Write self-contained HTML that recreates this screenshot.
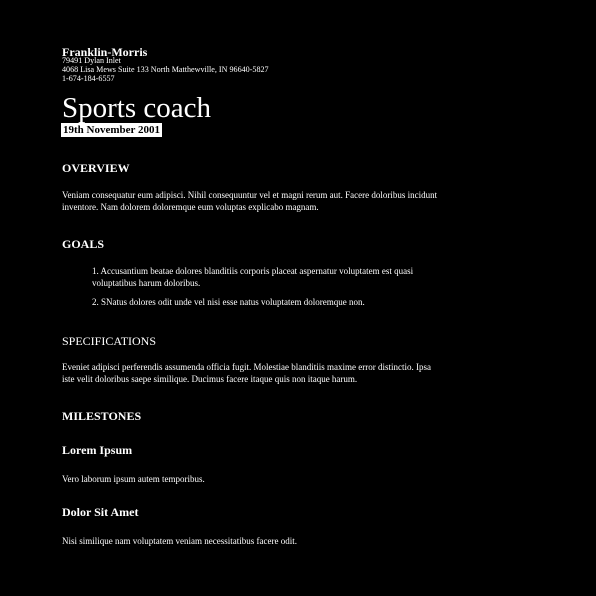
<!DOCTYPE html>
<html><head><style>
body{margin:0;background:#000;width:596px;height:596px;position:relative;overflow:hidden;color:#fff;font-family:"Liberation Serif",serif;}
div{position:absolute;left:62px;white-space:nowrap;}
.s{font-size:9px;line-height:12px;}
.h{font-size:12px;font-weight:bold;line-height:14px;}
.p{white-space:normal;width:380px;}
</style></head><body>
<div class="h" style="top:45px">Franklin-Morris</div>
<div style="top:56px;font-size:8.1px;line-height:9px">79491 Dylan Inlet<br>4068 Lisa Mews Suite 133 North Matthewville, IN 96640-5827<br>1-674-184-6557</div>
<div style="top:90px;font-size:29px;line-height:36px">Sports coach</div>
<div style="top:124px;font-size:11px;line-height:12px;font-weight:bold;background:#fff;color:#000;padding:0 1px;outline:1px solid #fff">19th November 2001</div>
<div class="h" style="top:161px">OVERVIEW</div>
<div class="s p" style="top:189px">Veniam consequatur eum adipisci. Nihil consequuntur vel et magni rerum aut. Facere doloribus incidunt inventore. Nam dolorem doloremque eum voluptas explicabo magnam.</div>
<div class="h" style="top:237px">GOALS</div>
<div class="s" style="top:265px;left:92px">1. Accusantium beatae dolores blanditiis corporis placeat aspernatur voluptatem est quasi<br>voluptatibus harum doloribus.</div>
<div class="s" style="top:296px;left:92px">2. SNatus dolores odit unde vel nisi esse natus voluptatem doloremque non.</div>
<div style="top:334px;font-size:12px;line-height:14px">SPECIFICATIONS</div>
<div class="s p" style="top:361px">Eveniet adipisci perferendis assumenda officia fugit. Molestiae blanditiis maxime error distinctio. Ipsa iste velit doloribus saepe similique. Ducimus facere itaque quis non itaque harum.</div>
<div class="h" style="top:409px">MILESTONES</div>
<div class="h" style="top:443px;font-size:12px">Lorem Ipsum</div>
<div class="s" style="top:473px">Vero laborum ipsum autem temporibus.</div>
<div class="h" style="top:505px;font-size:12px">Dolor Sit Amet</div>
<div class="s" style="top:535px">Nisi similique nam voluptatem veniam necessitatibus facere odit.</div>
</body></html>
